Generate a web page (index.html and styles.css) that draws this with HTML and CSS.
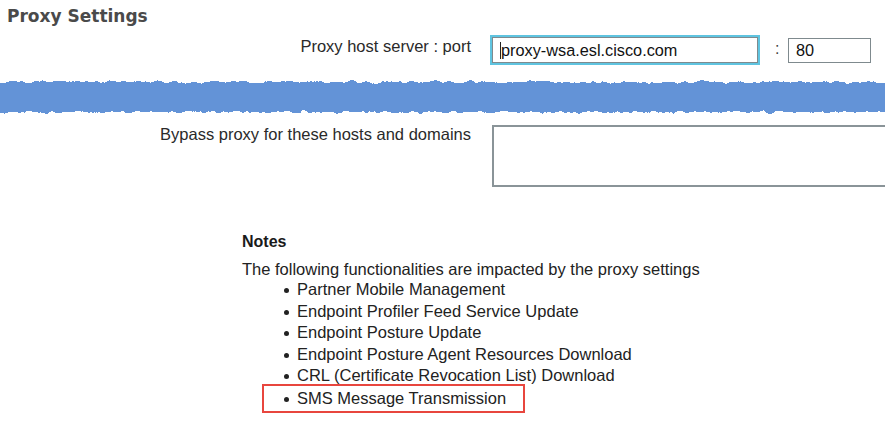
FILE: index.html
```html
<!DOCTYPE html>
<html>
<head>
<meta charset="utf-8">
<link rel="stylesheet" href="styles.css">
</head>
<body>
<h1 class="title">Proxy Settings</h1>
<div class="row row-host">
  <label class="label">Proxy host server : port</label>
  <div class="field-wrap">
    <input class="host-input" type="text" value="proxy-wsa.esl.cisco.com">
    <span class="caret"></span>
  </div>
  <span class="colon">:</span>
  <input class="port-input" type="text" value="80">
</div>
<svg class="band" width="885" height="40" viewBox="0 0 885 40" preserveAspectRatio="none">
  <defs>
    <filter id="rag" x="-5%" y="-50%" width="110%" height="200%">
      <feTurbulence type="fractalNoise" baseFrequency="0.12 0.06" numOctaves="4" seed="7" result="n"/>
      <feDisplacementMap in="SourceGraphic" in2="n" scale="6" xChannelSelector="R" yChannelSelector="G"/>
    </filter>
  </defs>
  <rect x="-10" y="5" width="905" height="30" fill="#6393d7" filter="url(#rag)"/>
</svg>
<div class="row row-bypass">
  <label class="label">Bypass proxy for these hosts and domains</label>
  <textarea class="bypass"></textarea>
</div>
<div class="notes">
  <h2 class="notes-title">Notes</h2>
  <p class="notes-intro">The following functionalities are impacted by the proxy settings</p>
  <ul class="notes-list">
    <li>Partner Mobile Management</li>
    <li>Endpoint Profiler Feed Service Update</li>
    <li>Endpoint Posture Update</li>
    <li>Endpoint Posture Agent Resources Download</li>
    <li>CRL (Certificate Revocation List) Download</li>
    <li class="highlight">SMS Message Transmission</li>
  </ul>
</div>
</body>
</html>
```
FILE: styles.css
```css
* { box-sizing: border-box; }
html, body { margin: 0; padding: 0; background: #fff; }
body {
  width: 885px;
  height: 424px;
  overflow: hidden;
  font-family: "Liberation Sans", Arial, sans-serif;
  color: #222;
}
.title {
  margin: 0;
  padding: 6px 0 0 7px;
  font-family: "DejaVu Sans", Verdana, sans-serif;
  font-weight: bold;
  font-size: 17px;
  line-height: 21px;
  color: #4a4a4a;
}
.row {
  display: flex;
  align-items: flex-start;
}
.label {
  width: 471px;
  text-align: right;
  font-size: 16.5px;
  color: #2a2a2a;
  flex: none;
}
.row-host { margin-top: 10px; }
.field-wrap {
  position: relative;
  margin-left: 21px;
  flex: none;
}
.host-input {
  display: block;
  width: 266px;
  height: 26px;
  border: 1px solid #7f8a8e;
  outline: 2px solid #5fc4e0;
  outline-offset: 0;
  padding: 0 0 0 8px;
  font-family: "Liberation Sans", Arial, sans-serif;
  font-size: 16.3px;
  color: #111;
  background: #fff;
}
.caret {
  position: absolute;
  left: 8px;
  top: 5px;
  width: 1px;
  height: 17px;
  background: #222;
}
.colon {
  margin-left: 17px;
  width: 13px;
  padding-top: 3px;
  font-size: 16px;
  color: #444;
}
.port-input {
  width: 83px;
  height: 25px;
  margin-top: 1px;
  border: 1.5px solid #7f8a8e;
  padding: 0 0 0 7px;
  font-family: "Liberation Sans", Arial, sans-serif;
  font-size: 16.3px;
  color: #111;
  outline: none;
}
.band {
  display: block;
  margin-top: 14px;
  width: 885px;
  height: 40px;
}
.row-bypass { margin-top: 8px; }
.bypass {
  margin-left: 21px;
  width: 400px;
  height: 62px;
  border: 2px solid #8a9498;
  resize: none;
  flex: none;
}
.notes {
  margin-left: 242px;
  margin-top: 46px;
}
.notes-title {
  margin: 0;
  font-size: 16px;
  font-weight: bold;
  line-height: 18px;
  color: #1a1a1a;
}
.notes-intro {
  margin: 9px 0 0 0;
  font-size: 16.5px;
  line-height: 19px;
}
.notes-list {
  list-style: none;
  margin: 0;
  padding: 0;
}
.notes-list li {
  position: relative;
  padding-left: 55px;
  font-size: 16.5px;
  line-height: 21.6px;
}
.notes-list li::before {
  content: "";
  position: absolute;
  left: 42px;
  top: 9px;
  width: 5px;
  height: 5px;
  border-radius: 50%;
  background: #222;
}
.notes-list li.highlight {
  margin-left: 20px;
  margin-top: -3px;
  padding-left: 33px;
  width: 263px;
  height: 29px;
  line-height: 25px;
  border: 2px solid #e8463e;
}
.notes-list li.highlight::before {
  left: 20px;
  top: 11px;
}
```
